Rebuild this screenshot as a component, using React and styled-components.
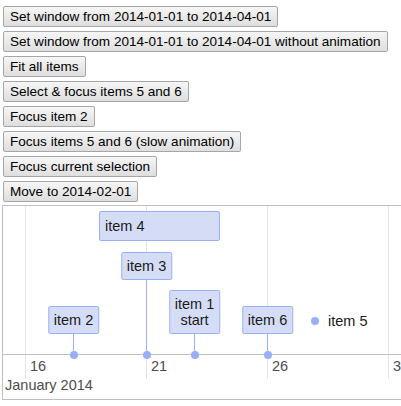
import React from 'react'
import styled, { createGlobalStyle } from 'styled-components'

const GlobalStyle = createGlobalStyle`
    body {
        margin: 0;
        overflow: hidden;
        background: #ffffff;
        font-family: "Liberation Sans", Arial, sans-serif;
    }
`

const Page = styled.div`
    padding: 6px 0 0 2px;
`
const Controls = styled.div`
    display: flex;
    flex-direction: column;
    align-items: flex-start;
    gap: 4px;
    padding-left: 1px;
`
const Button = styled.button`
    height: 21px;
    padding: 0 6px;
    font-family: "Liberation Sans", Arial, sans-serif;
    font-size: 13.55px;
    color: #000000;
    background: linear-gradient(#f6f6f6, #dedede);
    border: 1px solid #a6a6a6;
    border-radius: 2px;
    white-space: nowrap;
`
const Timeline = styled.div`
    display: flex;
    flex-direction: column;
    margin-top: 3px;
    width: 430px;
    height: 193px;
    border: 1px solid #bfbfbf;
    overflow: hidden;
    font-size: 14.5px;
`
const ItemPanel = styled.div`
    position: relative;
    height: 148px;
    flex: none;
    border-bottom: 1px solid #bfbfbf;
`
const AxisPanel = styled.div`
    position: relative;
    flex: 1;
    display: flex;
    flex-direction: column;
    justify-content: flex-end;
    padding: 0 0 6px 2px;
`
const GridLine = styled.div`
    position: absolute;
    top: 0;
    height: ${(p) => p.$h}px;
    width: 1px;
    background: #e5e5e5;
`
const MinorLabel = styled.div`
    position: absolute;
    top: 3px;
    color: #4d4d4d;
`
const MajorLabel = styled.div`
    color: #4d4d4d;
`
const Box = styled.div`
    position: absolute;
    transform: translateX(-50%);
    padding: 5px;
    line-height: 16px;
    text-align: center;
    color: #1a1a1a;
    background: #d5ddf6;
    border: 1px solid #97b0f8;
    border-radius: 2px;
    white-space: nowrap;
`
const Range = styled.div`
    position: absolute;
    box-sizing: border-box;
    height: 30px;
    padding: 6px 5px;
    line-height: 16px;
    color: #1a1a1a;
    background: #d5ddf6;
    border: 1px solid #97b0f8;
    border-radius: 2px;
`
const Stem = styled.div`
    position: absolute;
    width: 1px;
    background: #97b0f8;
`
const Dot = styled.div`
    position: absolute;
    z-index: 1;
    width: 8px;
    height: 8px;
    margin: -4px 0 0 -4px;
    border-radius: 50%;
    background: #97b0f8;
`
const Point = styled.div`
    position: absolute;
    display: flex;
    align-items: center;
    gap: 9px;
    transform: translate(-4px, -50%);
    color: #1a1a1a;
`
const PointDot = styled.span`
    width: 8px;
    height: 8px;
    border-radius: 50%;
    background: #97b0f8;
`

// Jan 16 sits 22px into the panel, one day is 24.2px
const dayX = (day) => Math.round(22 + (day - 16) * 24.2)
const PANEL = 148
const TICKS = [16, 21, 26, 31]

const buttons = [
    'Set window from 2014-01-01 to 2014-04-01',
    'Set window from 2014-01-01 to 2014-04-01 without animation',
    'Fit all items',
    'Select & focus items 5 and 6',
    'Focus item 2',
    'Focus items 5 and 6 (slow animation)',
    'Focus current selection',
    'Move to 2014-02-01',
]

const boxes = [
    { id: 3, day: 21, top: 46, lines: ['item 3'] },
    { id: 2, day: 18, top: 100, lines: ['item 2'] },
    { id: 1, day: 23, top: 84, lines: ['item 1', 'start'] },
    { id: 6, day: 26, top: 100, lines: ['item 6'] },
]

const App = () => {
  return (
      <Page>
        <GlobalStyle />
        <Controls>
            {buttons.map((b) => <Button key={b}>{b}</Button>)}
        </Controls>

        <Timeline>
            <ItemPanel>
                {TICKS.map((d) => <GridLine key={d} $h={PANEL} style={{ left: dayX(d) }} />)}

                <Range style={{ left: dayX(19) + 1, top: 5, width: dayX(24) - dayX(19) }}>item 4</Range>

                {boxes.map((b) => {
                    const x = dayX(b.day)
                    const h = 12 + b.lines.length * 16
                    return (
                        <React.Fragment key={b.id}>
                            <Stem style={{ left: x, top: b.top + h, height: PANEL - b.top - h }} />
                            <Dot style={{ left: x + 0.5, top: PANEL + 0.5 }} />
                            <Box style={{ left: x + 0.5, top: b.top }}>
                                {b.lines.map((l) => <div key={l}>{l}</div>)}
                            </Box>
                        </React.Fragment>
                    )
                })}

                <Point style={{ left: dayX(28), top: 115 }}>
                    <PointDot />
                    item 5
                </Point>
            </ItemPanel>

            <AxisPanel>
                {TICKS.map((d) => (
                    <React.Fragment key={d}>
                        <GridLine $h={24} style={{ left: dayX(d) }} />
                        <MinorLabel style={{ left: dayX(d) + 5 }}>{d}</MinorLabel>
                    </React.Fragment>
                ))}
                <MajorLabel>January 2014</MajorLabel>
            </AxisPanel>
        </Timeline>
      </Page>
  )
}

export default App
